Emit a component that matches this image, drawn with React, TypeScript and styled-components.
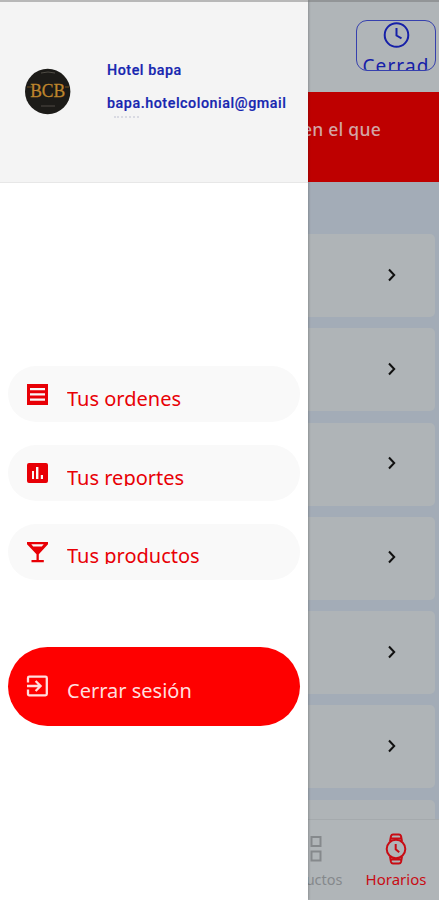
import React from 'react';
import styled, { createGlobalStyle } from 'styled-components';

const GlobalStyle = createGlobalStyle`
  * { box-sizing: border-box; }
  body { margin: 0; background: #fff; }
`;

const Screen = styled.div`
  position: relative;
  width: 439px;
  height: 900px;
  overflow: hidden;
  font-family: 'Noto Sans', sans-serif;
  background: #a3acb7;
`;

const Page = styled.main`
  height: 900px;
  display: flex;
  flex-direction: column;
`;

const TopBar = styled.header`
  height: 92px;
  flex: none;
  display: flex;
  justify-content: flex-end;
  padding: 20px 3px 0 0;
  background: #b0b5b8;
`;

const StatusButton = styled.div`
  width: 80px;
  height: 51px;
  overflow: hidden;
  border: 1px solid #3640ae;
  border-radius: 11px;
  display: flex;
  flex-direction: column;
  align-items: center;
  color: #1620a8;
  svg { flex: none; }
`;

const StatusText = styled.span`
  flex: none;
  font-size: 19px;
  line-height: 26px;
  letter-spacing: 1.1px;
  margin-top: 3px;
`;

const Notice = styled.div`
  height: 90px;
  flex: none;
  padding: 24px 58px 0 0;
  text-align: right;
  background: #be0000;
  color: #d3a5a5;
  font-size: 17.5px;
  font-weight: 500;
  line-height: 26px;
  letter-spacing: 0.25px;
`;

const List = styled.section`
  flex: 1;
  min-height: 0;
  overflow: hidden;
  padding: 52px 4px 0 12px;
  display: flex;
  flex-direction: column;
  gap: 11.3px;
`;

const Card = styled.div`
  height: 83px;
  flex: none;
  border-radius: 5px;
  background: #afb4b7;
  display: flex;
  align-items: center;
  justify-content: flex-end;
  padding: 0 37px 2px 0;
`;

const TabBar = styled.nav`
  height: 81px;
  flex: none;
  display: flex;
  justify-content: flex-end;
  border-top: 1px solid #a5aaad;
  background: #b0b5b8;
`;

const Tab = styled.div<{ $active?: boolean }>`
  width: ${(p) => (p.$active ? 86 : 90)}px;
  display: flex;
  flex-direction: column;
  align-items: center;
  color: ${(p) => (p.$active ? '#c80c14' : '#85898c')};
  font-size: ${(p) => (p.$active ? 15 : 14.5)}px;
  line-height: 20px;
  svg { flex: none; margin: 12px 0 3px; }
`;

const Drawer = styled.aside`
  position: absolute;
  inset: 0 auto 0 0;
  width: 308px;
  background: #fff;
  box-shadow: 1px 0 2px rgba(0, 0, 0, 0.2);
`;

const Profile = styled.div`
  height: 183px;
  display: flex;
  padding: 60px 0 0 25px;
  gap: 36px;
  background: #f4f4f4;
  border-bottom: 1px solid #e7e7e7;
`;

const Account = styled.div`
  color: #1726b0;
  font: 500 14.3px/20px Roboto, sans-serif;
  letter-spacing: 0.55px;
  -webkit-text-stroke: 0.2px;
`;

const Email = styled.div`
  margin-top: 13px;
  height: 26px;
  overflow: hidden;
`;

const ClippedLine = styled.div`
  height: 2px;
  width: 25px;
  margin: 3px 0 0 7px;
  border-top: 2px dotted #d9dae2;
`;

const Menu = styled.div`
  display: flex;
  flex-direction: column;
  gap: 23px;
  padding: 183px 8px 0;
`;

const MenuItem = styled.div`
  height: 56px;
  display: flex;
  gap: 18px;
  padding: 17px 0 0 17px;
  border-radius: 28px;
  background: #f9f9f9;
  color: #e80006;
`;

const MenuLabel = styled.span<{ $clip?: boolean; $top?: number }>`
  margin-top: ${(p) => p.$top ?? 1}px;
  height: ${(p) => (p.$clip ? 23 : 29)}px;
  overflow: hidden;
  white-space: nowrap;
  font-size: 20px;
  line-height: 29px;
`;

const Logout = styled.div`
  height: 79px;
  margin: 67px 8px 0;
  padding: 27px 0 0 17px;
  display: flex;
  gap: 18px;
  border-radius: 40px;
  background: #fe0000;
  color: #ffdede;
`;

const StatusEdge = styled.div`
  position: absolute;
  inset: 0 0 auto;
  height: 2px;
  background: rgba(110, 110, 110, 0.45);
`;

const Clock = () => (
  <svg width="29" height="29" viewBox="0 0 29 29" fill="none" stroke="currentColor" strokeWidth="2">
    <circle cx="14.5" cy="14" r="11.8" />
    <path d="M14.5 7v7.5l5 2.8" />
  </svg>
);

const Chevron = () => (
  <svg width="13" height="16" viewBox="0 0 13 16" fill="none" stroke="#111" strokeWidth="2">
    <path d="M4 2.5 9.2 8 4 13.5" />
  </svg>
);

const Logo = () => (
  <svg width="46" height="64" viewBox="0 0 46 64">
    <circle cx="22.7" cy="31.5" r="22.7" fill="#1c1b18" />
    <path d="M16 13q7-2 14 0M16 46h14" stroke="#4e4b44" fill="none" />
    <path d="M2 27h5M40 27h4" stroke="#70501d" />
    <text x="22.7" y="37" textAnchor="middle" fontFamily="Liberation Serif, serif" fontSize="19" textLength="35" lengthAdjust="spacingAndGlyphs" fill="#bd852c" stroke="#bd852c" strokeWidth="0.3">BCB</text>
  </svg>
);

const iconProps = { width: 24, height: 24, viewBox: '0 0 24 24', fill: 'currentColor' };

const OrdersIcon = () => (
  <svg {...iconProps}>
    <path fillRule="evenodd" d="M2 1h21v21H2zM5 5v2.3h15V5zM5 10.3v2.200h15v-2.200zM5 15.500v2.300h15v-2.300z" />
  </svg>
);

const ReportsIcon = () => (
  <svg {...iconProps}>
    <path fillRule="evenodd" d="M4 1h17q2 0 2 2v16q0 2-2 2H4q-2 0-2-2V3q0-2 2-2zM7 9v8h2V9zM11 5v12h2.400V5zM15.800 13v4H18v-4z" />
  </svg>
);

const CocktailIcon = () => (
  <svg {...iconProps}>
    <path fillRule="evenodd" d="M2 1h21v2.300l-9.200 10V19h5v2.300H6.500V19h5v-5.700L2 3.300zM6.300 3.300l1.900 2.200h8.600l1.900-2.200z" />
  </svg>
);

const ExitIcon = () => (
  <svg {...iconProps} fill="none" stroke="currentColor" strokeWidth="2.3">
    <path d="M3 8.500V4q0-1.300 1.300-1.300h16.200q1.300 0 1.300 1.300v16q0 1.300-1.300 1.300H4.300Q3 21.300 3 20v-4.500M2 12h13M10.600 7l5 5-5 5" />
  </svg>
);

const GridIcon = () => (
  <svg width="30" height="34" viewBox="0 0 30 34" fill="none" stroke="currentColor" strokeWidth="2">
    <path d="M4 5h9v9H4zM18.500 5h9v9h-9zM4 19.500h9v9H4zM18.500 19.500h9v9h-9z" />
  </svg>
);

const WatchIcon = () => (
  <svg width="26" height="34" viewBox="0 0 26 34" fill="none" stroke="currentColor" strokeWidth="2">
    <circle cx="13" cy="17" r="9.300" />
    <path d="M7 9.500 8 4q.5-1.500 2-1.500h6q1.500 0 2 1.500l1 5.500M7 24.500 8 30q.5 1.500 2 1.500h6q1.500 0 2-1.500l1-5.500M8 6.500h10M8 27.500h10M12.700 12v5.200l3.500 3" />
  </svg>
);

const schedule = ['Lunes', 'Martes', 'Miércoles', 'Jueves', 'Viernes', 'Sábado', 'Domingo'];

export default function App() {
  return (
    <Screen>
      <GlobalStyle />
      <Page>
        <TopBar>
          <StatusButton>
            <Clock />
            <StatusText>Cerrad</StatusText>
          </StatusButton>
        </TopBar>
        <Notice>en el que</Notice>
        <List>
          {schedule.map((day) => (
            <Card key={day}><Chevron /></Card>
          ))}
        </List>
        <TabBar>
          <Tab><GridIcon />Productos</Tab>
          <Tab $active><WatchIcon />Horarios</Tab>
        </TabBar>
      </Page>
      <Drawer>
        <Profile>
          <Logo />
          <Account>
            <div>Hotel bapa</div>
            <Email>bapa.hotelcolonial@gmail<ClippedLine /></Email>
          </Account>
        </Profile>
        <Menu>
          <MenuItem><OrdersIcon /><MenuLabel>Tus ordenes</MenuLabel></MenuItem>
          <MenuItem><ReportsIcon /><MenuLabel $clip>Tus reportes</MenuLabel></MenuItem>
          <MenuItem><CocktailIcon /><MenuLabel $clip $top={0}>Tus productos</MenuLabel></MenuItem>
        </Menu>
        <Logout><ExitIcon /><MenuLabel $top={2}>Cerrar sesión</MenuLabel></Logout>
      </Drawer>
      <StatusEdge />
    </Screen>
  );
}
